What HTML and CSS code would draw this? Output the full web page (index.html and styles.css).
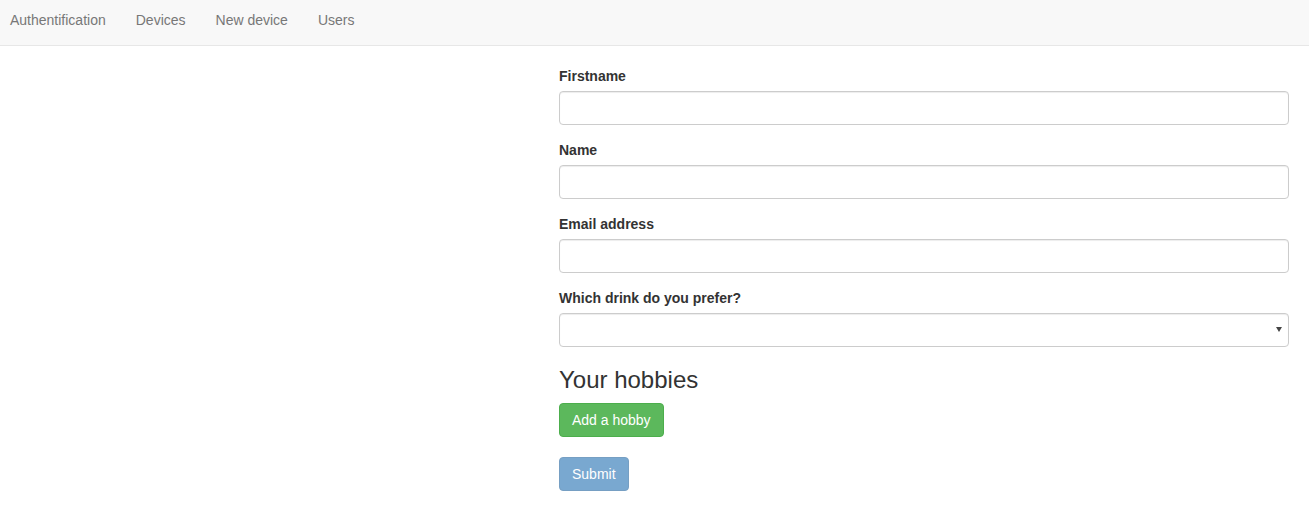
FILE: index.html
```html
<!DOCTYPE html>
<html lang="en">
<head>
<meta charset="utf-8">
<title>New device</title>
<link rel="stylesheet" href="styles.css">
</head>
<body>
<nav class="navbar">
  <ul class="nav">
    <li><a href="#">Authentification</a></li>
    <li><a href="#">Devices</a></li>
    <li><a href="#">New device</a></li>
    <li><a href="#">Users</a></li>
  </ul>
</nav>
<main class="layout">
  <div class="spacer"></div>
  <form class="form">
    <div class="form-group">
      <label for="firstname">Firstname</label>
      <input id="firstname" class="form-control" type="text">
    </div>
    <div class="form-group">
      <label for="name">Name</label>
      <input id="name" class="form-control" type="text">
    </div>
    <div class="form-group">
      <label for="email">Email address</label>
      <input id="email" class="form-control" type="email">
    </div>
    <div class="form-group">
      <label for="drink">Which drink do you prefer?</label>
      <div class="select-wrap">
        <select id="drink" class="form-control"><option></option></select>
        <span class="caret"></span>
      </div>
    </div>
    <h3 class="heading">Your hobbies</h3>
    <div class="hobbies">
      <button type="button" class="btn btn-success">Add a hobby</button>
    </div>
    <button type="submit" class="btn btn-primary" disabled>Submit</button>
  </form>
</main>
</body>
</html>
```
FILE: styles.css
```css
* { box-sizing: border-box; }
html, body { margin: 0; padding: 0; }
body {
  font-family: "Liberation Sans", Arial, Helvetica, sans-serif;
  font-size: 14px;
  line-height: 1.42857;
  color: #333;
  background: #fff;
}
.navbar {
  height: 46px;
  background: #f8f8f8;
  border-bottom: 1px solid #e7e7e7;
  margin-bottom: 20px;
  padding-left: 10px;
}
.nav {
  list-style: none;
  margin: 0;
  padding: 10px 0 0;
  display: flex;
  gap: 30px;
  height: 45px;
  align-items: flex-start;
}
.nav a {
  color: #777;
  text-decoration: none;
  font-size: 14px;
  line-height: 20px;
  display: block;
}
.layout {
  display: grid;
  grid-template-columns: 559px 730px;
}
.form { margin: 0; }
.form-group { margin-bottom: 15px; }
label {
  display: block;
  font-weight: bold;
  margin-bottom: 5px;
  line-height: 20px;
}
.form-control {
  display: block;
  width: 100%;
  height: 34px;
  padding: 6px 12px;
  font-size: 14px;
  font-family: inherit;
  color: #555;
  background: #fff;
  border: 1px solid #ccc;
  border-radius: 4px;
  box-shadow: inset 0 1px 1px rgba(0,0,0,.075);
  margin: 0;
}
.select-wrap { position: relative; }
select.form-control {
  -webkit-appearance: none;
  appearance: none;
}
.caret {
  position: absolute;
  right: 7px;
  top: 14px;
  width: 0;
  height: 0;
  border-left: 3px solid transparent;
  border-right: 3px solid transparent;
  border-top: 5px solid #444;
  pointer-events: none;
}
.heading {
  font-size: 24px;
  font-weight: 500;
  line-height: 1.1;
  margin: 20px 0 10px;
  color: #333;
}
.hobbies { margin-bottom: 20px; }
.btn {
  display: inline-block;
  padding: 6px 12px;
  font-size: 14px;
  font-family: inherit;
  line-height: 20px;
  border: 1px solid transparent;
  border-radius: 4px;
  color: #fff;
  cursor: pointer;
  margin: 0;
}
.btn-success { background: #5cb85c; border-color: #4cae4c; }
.btn-primary { background: #337ab7; border-color: #2e6da4; }
.btn[disabled] { opacity: .65; cursor: not-allowed; box-shadow: none; }
```
